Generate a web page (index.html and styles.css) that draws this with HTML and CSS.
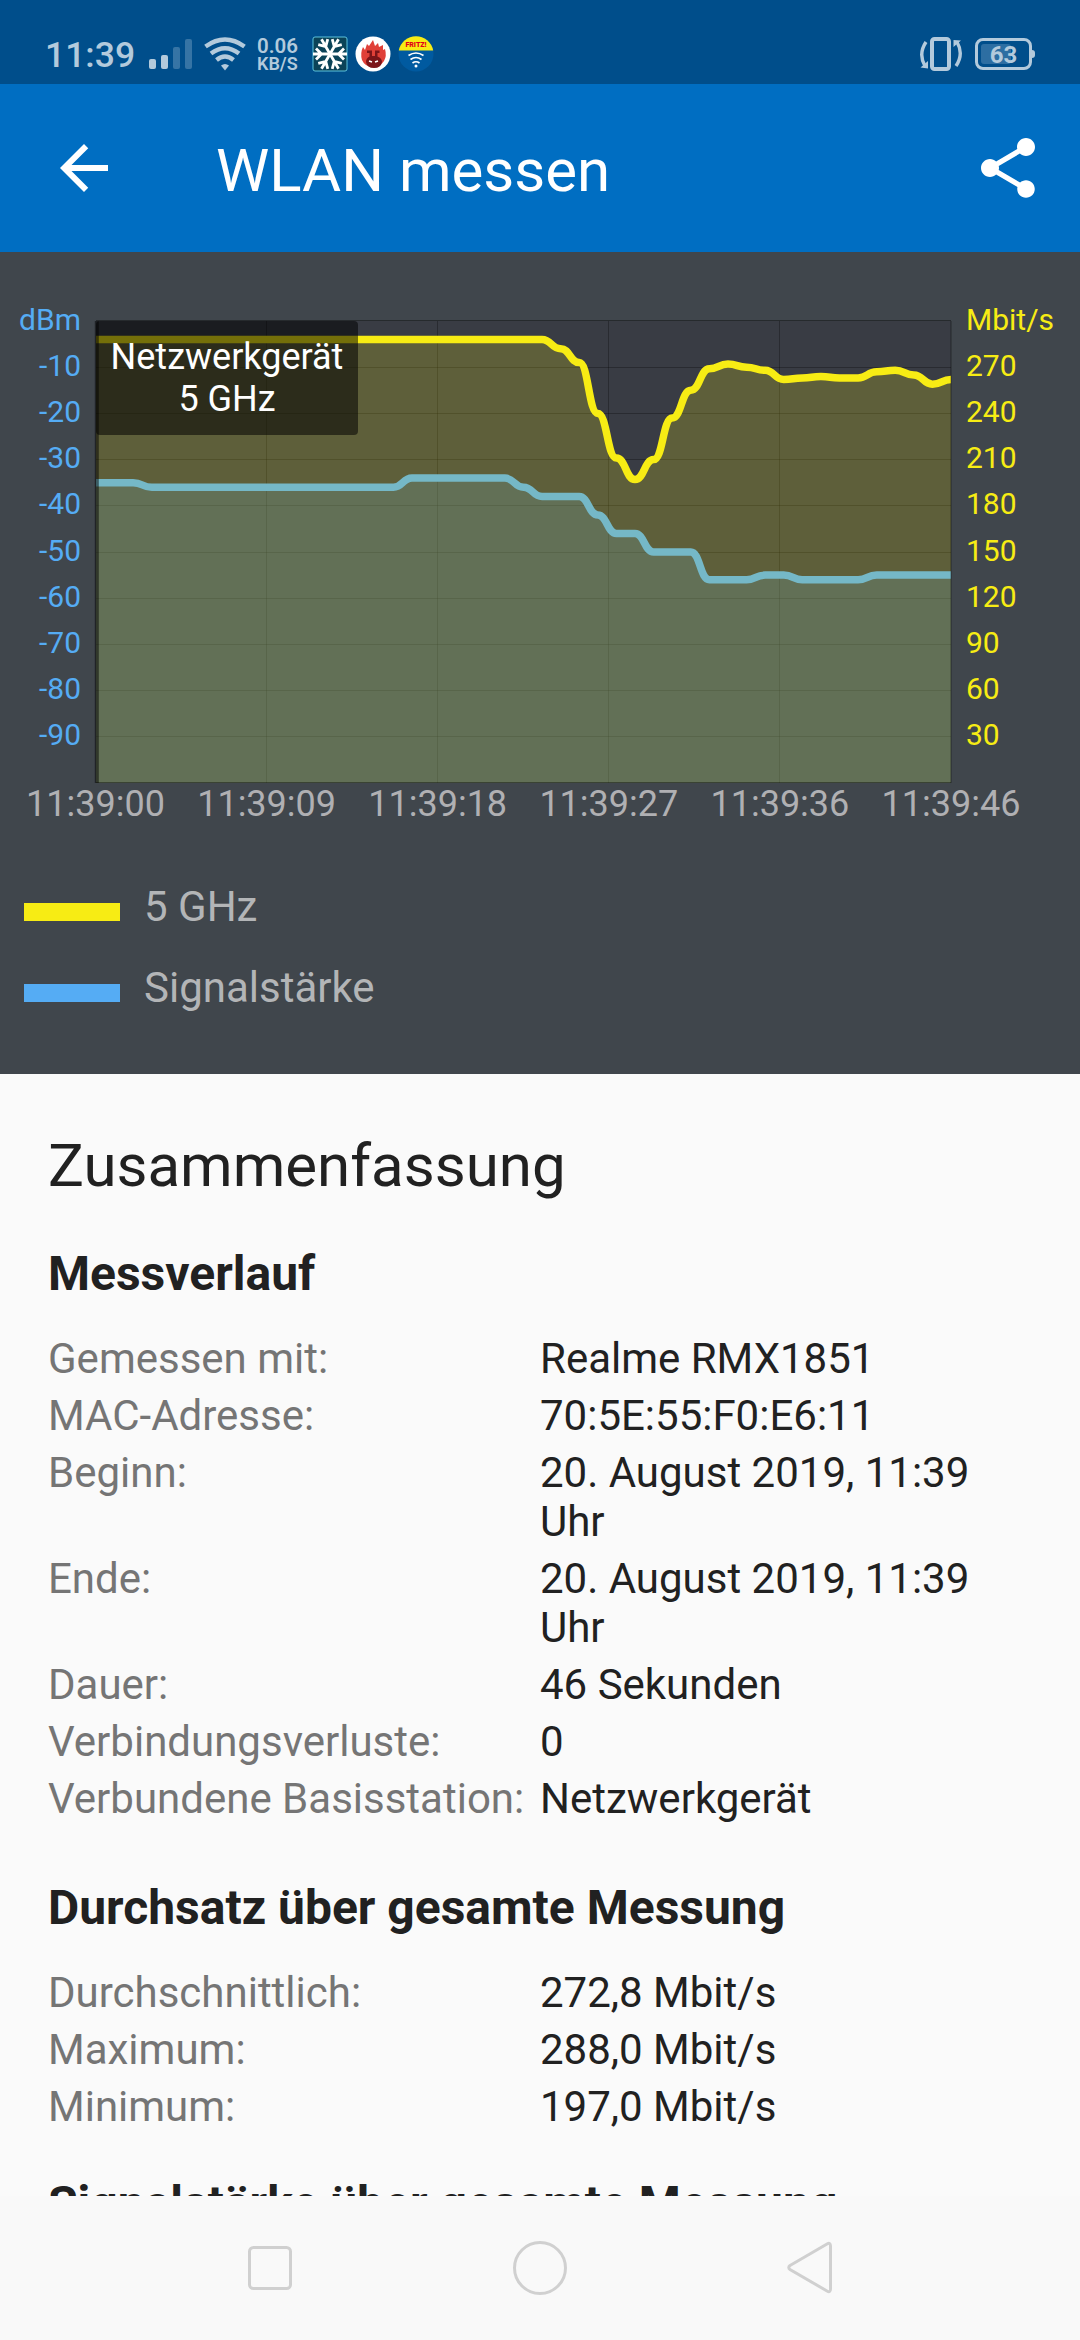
FILE: index.html
```html
<!DOCTYPE html>
<html lang="de">
<head>
    <meta charset="utf-8">
    <title>WLAN messen</title>
    <link rel="stylesheet" href="styles.css">
</head>
<body>

    <div class="status-bar">
        <span class="clock">11:39</span>
        <svg class="icon-signal" width="44" height="32" viewBox="0 0 44 32">
            <rect x="0" y="21" width="7" height="10" rx="2" fill="#b3cadc"/>
            <rect x="12" y="17" width="7" height="14" rx="2" fill="#b3cadc"/>
            <rect x="24" y="9" width="7" height="22" rx="2" fill="#3674a5"/>
            <rect x="36" y="1" width="7" height="30" rx="2" fill="#3674a5"/>
        </svg>
        <svg class="icon-wifi" width="42" height="34" viewBox="0 0 42 34">
            <g fill="none" stroke="#b3cadc" stroke-width="4.4">
                <path d="M1.5 9.5Q21 -4.500 40.500 9.500"/>
                <path d="M7 16.500Q21 6 35 16.500"/>
                <path d="M12.500 23Q21 16 29.500 23"/>
            </g>
            <path d="M17 28.500Q21 25.500 25 28.500L21 33.500Z" fill="#b3cadc"/>
        </svg>
        <div class="net-speed">
            <span>0.06</span>
            <span class="unit">KB/S</span>
        </div>
        <svg class="app-icon" width="36" height="36" viewBox="0 0 36 36">
            <rect x="1" y="1" width="34" height="34" rx="2" fill="#0b4358" stroke="#5cc3dc"/>
            <g stroke="#fff" stroke-width="2.8" fill="none" transform="rotate(90 18 18)">
                <g id="arm"><path d="M18 18V1M12.500 4L18 9.500L23.500 4"/></g>
                <use href="#arm" transform="rotate(60 18 18)"/>
                <use href="#arm" transform="rotate(120 18 18)"/>
                <use href="#arm" transform="rotate(180 18 18)"/>
                <use href="#arm" transform="rotate(240 18 18)"/>
                <use href="#arm" transform="rotate(300 18 18)"/>
            </g>
        </svg>
        <svg class="app-icon" width="36" height="36" viewBox="0 0 36 36">
            <circle cx="18" cy="18" r="17.500" fill="#fff"/>
            <path d="M7 24Q5 17 8 11L10 14L12 8L14 10L18 4L20 10L23 7L24 11L28 9L28 14L30 13Q32 20 29 25Q25 31 18 31Q10 31 7 24Z" fill="#e04038"/>
            <path d="M11 26Q11 22 14.500 20.500V17H12V14.500H17V20H20V14.500H24.500V17H22.500V20.500Q27 22 27 26Q26 32 19 32Q12 32 11 26Z" fill="#7b1519"/>
            <path d="M14 25L17 26M23 25L20 26" stroke="#fff" stroke-width="1.500"/>
        </svg>
        <svg class="app-icon" width="36" height="36" viewBox="0 0 36 36">
            <circle cx="18" cy="18" r="17.500" fill="#005aa0"/>
            <path d="M0.800 14.500A17.500 17.500 0 0 1 35.200 14.500Z" fill="#f7ec14"/>
            <text x="18" y="11" text-anchor="middle" class="fritz">FRITZ!</text>
            <g fill="none" stroke="#fff" stroke-width="1.700">
                <path d="M10.500 19.500Q18 14.500 25.500 19.500M12.500 23.500Q18 19.500 23.500 23.500M14.500 27Q18 24.500 21.500 27"/>
            </g>
            <circle cx="18" cy="30" r="1.500" fill="#fff"/>
        </svg>
        <div class="status-right">
            <svg width="44" height="36" viewBox="0 0 44 36">
                <rect x="13" y="3" width="17" height="30" rx="2.500" fill="none" stroke="#b3cadc" stroke-width="4"/>
                <path d="M7 6Q-1 18 6 30M37 30Q45 18 38 6" fill="none" stroke="#b3cadc" stroke-width="3.400"/>
                <path d="M1.500 31.500L9 25V32.500ZM34.500 4L42 4.500L34.500 11Z" fill="#b3cadc"/>
            </svg>
            <div class="battery"><span class="level"></span><span class="percent">63</span></div>
            <div class="battery-tip"></div>
        </div>
    </div>

    <div class="app-bar">
        <svg class="back" width="72" height="72" viewBox="0 0 24 24">
            <path d="M20 11H7.830l5.590-5.590L12 4l-8 8 8 8 1.410-1.410L7.830 13H20v-2z" fill="#fff"/>
        </svg>
        <h1>WLAN messen</h1>
        <svg class="share" width="72" height="72" viewBox="0 0 24 24">
            <path d="M18 16.080c-.76 0-1.440.3-1.960.77L8.910 12.700c.05-.23.09-.46.09-.7s-.04-.47-.09-.7l7.050-4.110c.54.5 1.250.81 2.040.81 1.660 0 3-1.340 3-3s-1.340-3-3-3-3 1.340-3 3c0 .24.04.47.09.7L8.040 9.810C7.500 9.310 6.790 9 6 9c-1.660 0-3 1.340-3 3s1.340 3 3 3c.79 0 1.500-.31 2.040-.81l7.120 4.160c-.05.21-.08.43-.08.65 0 1.610 1.310 2.920 2.920 2.920s2.920-1.310 2.920-2.920-1.310-2.920-2.920-2.920z" fill="#fff"/>
        </svg>
    </div>

    <div class="chart-panel">
        <svg id="chart" class="chart" width="1080" height="588" viewBox="0 252 1080 588">
            <rect x="96" y="321" width="855" height="462" fill="#393c44"/>
            <g id="grid" stroke="#000" stroke-opacity="0.27"></g>
            <path id="signalArea" fill="#55acf4" fill-opacity="0.2"/>
            <path id="signalLine" class="line" stroke="#55acf4"/>
            <path id="speedArea" fill="#f7ec14" fill-opacity="0.2"/>
            <path id="speedLine" class="line" stroke="#f7ec14"/>
            <path d="M96.800 321V783" stroke="#000" stroke-opacity="0.5" stroke-width="4"/>
            <path d="M96 320.500H951M96 782.500H951M951 321V783" stroke="#000" stroke-opacity="0.4"/>
            <g id="labels"></g>
            <rect x="96" y="321" width="262" height="114" rx="4" fill="#000" fill-opacity="0.53"/>
            <text x="227" y="369" class="tip">Netzwerkgerät</text>
            <text x="227" y="411" class="tip">5 GHz</text>
        </svg>
        <div class="legend">
            <div class="legend-item"><span class="swatch speed"></span>5 GHz</div>
            <div class="legend-item"><span class="swatch signal"></span>Signalstärke</div>
        </div>
    </div>

    <div class="summary">
        <h2>Zusammenfassung</h2>

        <h3>Messverlauf</h3>
        <dl class="history">
            <dt>Gemessen mit:</dt><dd>Realme RMX1851</dd>
            <dt>MAC-Adresse:</dt><dd>70:5E:55:F0:E6:11</dd>
            <dt>Beginn:</dt><dd>20. August 2019, 11:39 Uhr</dd>
            <dt>Ende:</dt><dd>20. August 2019, 11:39 Uhr</dd>
            <dt>Dauer:</dt><dd>46 Sekunden</dd>
            <dt>Verbindungsverluste:</dt><dd>0</dd>
            <dt>Verbundene Basisstation:</dt><dd>Netzwerkgerät</dd>
        </dl>

        <h3>Durchsatz über gesamte Messung</h3>
        <dl>
            <dt>Durchschnittlich:</dt><dd>272,8 Mbit/s</dd>
            <dt>Maximum:</dt><dd>288,0 Mbit/s</dd>
            <dt>Minimum:</dt><dd>197,0 Mbit/s</dd>
        </dl>

        <h3>Signalstärke über gesamte Messung</h3>
    </div>

    <div class="nav-bar">
        <svg width="60" height="60" viewBox="0 0 60 60"><rect x="9.500" y="9.500" width="41" height="41" rx="4"/></svg>
        <svg width="60" height="60" viewBox="0 0 60 60"><circle cx="30" cy="30" r="25.500"/></svg>
        <svg width="60" height="60" viewBox="0 0 60 60"><path d="M10 27.500L47 6Q50.500 4 50.500 8V51Q50.500 55 47 53L10 31.500Q7.500 29.500 10 27.500Z"/></svg>
    </div>

    <script>
        const speed = [282, 273, 240, 211, 197, 210, 237, 255, 269, 272, 270, 268, 262,
            263, 264, 263, 263, 267, 268, 265, 259, 262];
        const signal = [];
        // [value, number of seconds]
        [[35, 3], [36, 14], [34, 6], [36, 1], [38, 3], [42, 1], [46, 2], [50, 3], [56, 3],
            [55, 2], [56, 4], [55, 5]].forEach(([v, n]) => {
            for (let i = 0; i < n; i++) signal.push(v);
        });
        while (speed.length < 47) speed.unshift(288);

        function curve(points) {
            let d = 'M' + points[0];
            for (let i = 1; i < points.length; i++) {
                const [x0, y0] = points[i - 1];
                const [x1, y1] = points[i];
                const mid = (x0 + x1) / 2;
                d += `C${mid} ${y0} ${mid} ${y1} ${x1} ${y1}`;
            }
            return d;
        }

        function draw(name, values, toY) {
            const d = curve(values.map((v, i) => [96 + i * 855 / 46, toY(v)]));
            document.getElementById(name + 'Line').setAttribute('d', d);
            document.getElementById(name + 'Area').setAttribute('d', d + 'V783H96Z');
        }

        draw('signal', signal, v => 321 + v * 4.62);
        draw('speed', speed, v => 321 + (300 - v) * 1.54);

        let grid = '';
        let labels = '<text x="81" y="330" class="dbm">dBm</text><text x="966" y="330" class="mbit">Mbit/s</text>';
        for (let i = 1; i < 10; i++) {
            const y = Math.round(321 + i * 46.1);
            grid += `<path d="M96 ${y + 0.5}H951"/>`;
            labels += `<text x="81" y="${y + 9}" class="dbm">-${i * 10}</text>`;
            labels += `<text x="966" y="${y + 9}" class="mbit">${300 - i * 30}</text>`;
        }
        ['00', '09', '18', '27', '36', '46'].forEach((s, i) => {
            const x = 95.5 + i * 171.1;
            if (i > 0 && i < 5) grid += `<path d="M${Math.floor(x) + 0.5} 321V783"/>`;
            labels += `<text x="${x}" y="816" class="time">11:39:${s}</text>`;
        });
        document.getElementById('grid').innerHTML = grid;
        document.getElementById('labels').innerHTML = labels;
    </script>
</body>
</html>
```
FILE: styles.css
```css
*{
    box-sizing: border-box;
}
body{
    margin: 0;
    width: 1080px;
    height: 2340px;
    overflow: hidden;
    display: flex;
    flex-direction: column;
    background-color: #fafafa;
    color: #212121;
    font-family: Roboto, sans-serif;
    font-size: 42px;
}
svg{
    display: block;
    flex-shrink: 0;
}
h1, h2, h3, dl, dd{
    margin: 0;
}
.status-bar{
    height: 84px;
    flex-shrink: 0;
    display: flex;
    align-items: center;
    padding: 23px 45px 0 45px;
    background-color: #004e8b;
    color: #b3cadc;
}
.clock{
    width: 104px;
    padding-top: 3px;
    font-size: 35.5px;
    font-weight: 500;
    line-height: 44px;
}
.icon-wifi{
    margin-left: 11px;
}
.net-speed{
    width: 55px;
    margin-left: 11px;
    padding-top: 2px;
    display: flex;
    flex-direction: column;
    font-size: 20.5px;
    font-weight: 600;
    line-height: 18px;
}
.net-speed .unit{
    font-size: 18px;
}
.app-icon{
    margin-right: 7px;
}
.fritz{
    font-size: 7px;
    font-weight: 900;
    fill: #e2001a;
}
.status-right{
    margin-left: auto;
    display: flex;
    align-items: center;
}
.battery{
    width: 57px;
    height: 32px;
    margin-left: 12px;
    padding: 3px;
    border: 3px solid #b3cadc;
    border-radius: 8px;
    position: relative;
}
.level{
    display: block;
    width: 30px;
    height: 20px;
    border-radius: 3px;
    background-color: #2d6ea2;
}
.percent{
    position: absolute;
    left: 0;
    top: 0;
    width: 100%;
    text-align: center;
    font-size: 24px;
    font-weight: 700;
    line-height: 28px;
}
.battery-tip{
    width: 3px;
    height: 8px;
    border-radius: 0 3px 3px 0;
    background-color: #b3cadc;
}
.app-bar{
    height: 168px;
    flex-shrink: 0;
    display: flex;
    align-items: center;
    padding: 0 36px 0 48px;
    background-color: #006ec2;
    color: #fff;
}
.app-bar h1{
    flex: 1;
    margin-left: 96px;
    padding-top: 4px;
    font-size: 60px;
    font-weight: 400;
}
.chart-panel{
    height: 822px;
    flex-shrink: 0;
    background-color: #40464c;
}
.line{
    fill: none;
    stroke-width: 7.5;
}
.dbm, .mbit{
    font-size: 30px;
}
.dbm{
    fill: #55acf4;
    text-anchor: end;
}
.mbit{
    fill: #f7ec14;
}
.time, .tip{
    font-size: 36px;
    text-anchor: middle;
}
.time{
    fill: #b0b0b3;
}
.tip{
    fill: #fff;
}
.legend{
    padding: 42px 24px;
    display: flex;
    flex-direction: column;
    gap: 32px;
    color: #b3b5b7;
}
.legend-item{
    display: flex;
    align-items: center;
    line-height: 49px;
}
.swatch{
    width: 96px;
    height: 18px;
    margin: 11px 24px 0 0;
}
.speed{
    background-color: #f7ec14;
}
.signal{
    background-color: #55acf4;
}
.summary{
    flex: 1;
    min-height: 0;
    overflow: hidden;
    padding: 56px 48px 0;
}
.summary h2{
    font-size: 60px;
    font-weight: 400;
    line-height: 71px;
}
.summary h3{
    margin-top: 45px;
    font-size: 48px;
    font-weight: 700;
    line-height: 56px;
}
dl{
    margin-top: 32px;
    display: grid;
    grid-template-columns: 492px 1fr;
    row-gap: 8px;
    line-height: 49px;
}
.history{
    padding-bottom: 12px;
}
dt{
    color: #757575;
}
.nav-bar{
    height: 144px;
    flex-shrink: 0;
    display: flex;
    align-items: center;
    justify-content: center;
    gap: 210px;
    background-color: #f9f9f9;
}
.nav-bar svg{
    fill: none;
    stroke: #d0d0d0;
    stroke-width: 3;
}
```
